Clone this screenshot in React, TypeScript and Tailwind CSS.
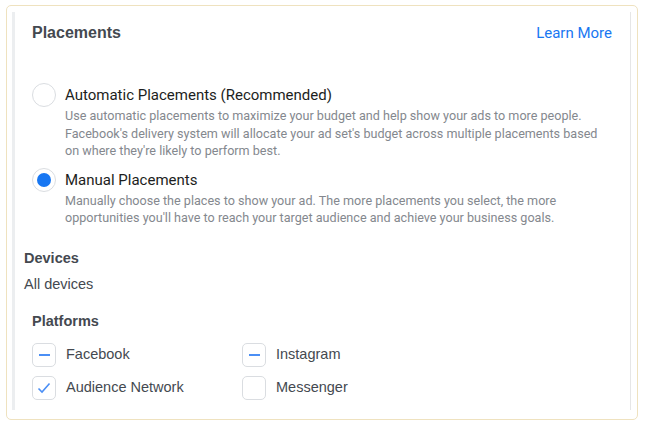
import { useState } from "react";

type Platform = { name: string; state: "mixed" | "checked" | "none" };

const platforms: Platform[] = [
  { name: "Facebook", state: "mixed" },
  { name: "Instagram", state: "mixed" },
  { name: "Audience Network", state: "checked" },
  { name: "Messenger", state: "none" },
];

function Radio({ checked }: { checked: boolean }) {
  return (
    <div className="w-6 h-6 rounded-full border border-[#dadde1] bg-white flex items-center justify-center shrink-0">
      {checked && <div className="w-[14px] h-[14px] rounded-full bg-[#1877f2]" />}
    </div>
  );
}

function Checkbox({ state }: { state: Platform["state"] }) {
  return (
    <div className="w-6 h-6 rounded-[5px] border border-[#dadde1] bg-white flex items-center justify-center shrink-0">
      {state === "mixed" && <div className="w-[11px] h-[2px] bg-[#4b8ff5]" />}
      {state === "checked" && (
        <svg width="16" height="16" viewBox="0 0 16 16" fill="none">
          <path d="M2.5 8.5 L6 12 L13.5 3.5" stroke="#4b8ff5" strokeWidth="1.6" />
        </svg>
      )}
    </div>
  );
}

export default function App() {
  const [manual, setManual] = useState(true);

  return (
    <div className="w-[645px] h-[429px] bg-white pl-[6px] pt-[5px] font-['Roboto',sans-serif] text-[#1c1e21]">
      <div className="w-[632px] h-[415px] border border-[#efe2bf] rounded-[5px] pl-[5px] pt-[6px]">
        <div className="w-[619px] h-[398px] border-l-[3px] border-l-[#eceef0] border-r border-r-[#e6e6e6] pl-[9px] pr-[18px]">
          <div className="flex items-center justify-between pl-[8px] pt-[9px]">
            <h2 className="font-['Liberation_Sans',sans-serif] font-bold text-[16px] text-[#444950]">
              Placements
            </h2>
            <a className="text-[15px] text-[#1877f2] cursor-pointer">Learn More</a>
          </div>

          <div className="pl-[8px] mt-[38px] flex flex-col gap-[8px]">
            <div className="flex gap-[9px] cursor-pointer" onClick={() => setManual(false)}>
              <Radio checked={!manual} />
              <div>
                <div className="text-[15px] leading-[24px]">Automatic Placements (Recommended)</div>
                <p className="text-[12.6px] leading-[17.5px] text-[#84888e]">
                  Use automatic placements to maximize your budget and help show your ads to more people.
                  <br />
                  Facebook's delivery system will allocate your ad set's budget across multiple placements
                  based on where they're likely to perform best.
                </p>
              </div>
            </div>
            <div className="flex gap-[9px] cursor-pointer" onClick={() => setManual(true)}>
              <Radio checked={manual} />
              <div>
                <div className="text-[15px] leading-[24px]">Manual Placements</div>
                <p className="text-[12.6px] leading-[17.5px] text-[#84888e]">
                  Manually choose the places to show your ad. The more placements you select, the more
                  opportunities you'll have to reach your target audience and achieve your business goals.
                </p>
              </div>
            </div>
          </div>

          <div className="mt-[21px] font-['Liberation_Sans',sans-serif] text-[14.5px] text-[#444950]">
            <div className="font-bold leading-[20px]">Devices</div>
            <div className="mt-[6px] leading-[20px]">All devices</div>
          </div>

          <div className="pl-[8px] mt-[17px] font-['Liberation_Sans',sans-serif] text-[14.5px] text-[#444950]">
            <div className="font-bold leading-[20px]">Platforms</div>
            <div className="grid grid-cols-[210px_1fr] gap-y-[9px] mt-[12px]">
              {platforms.map((p) => (
                <label key={p.name} className="flex items-center gap-[10px] cursor-pointer">
                  <Checkbox state={p.state} />
                  <span>{p.name}</span>
                </label>
              ))}
            </div>
          </div>
        </div>
      </div>
    </div>
  );
}
